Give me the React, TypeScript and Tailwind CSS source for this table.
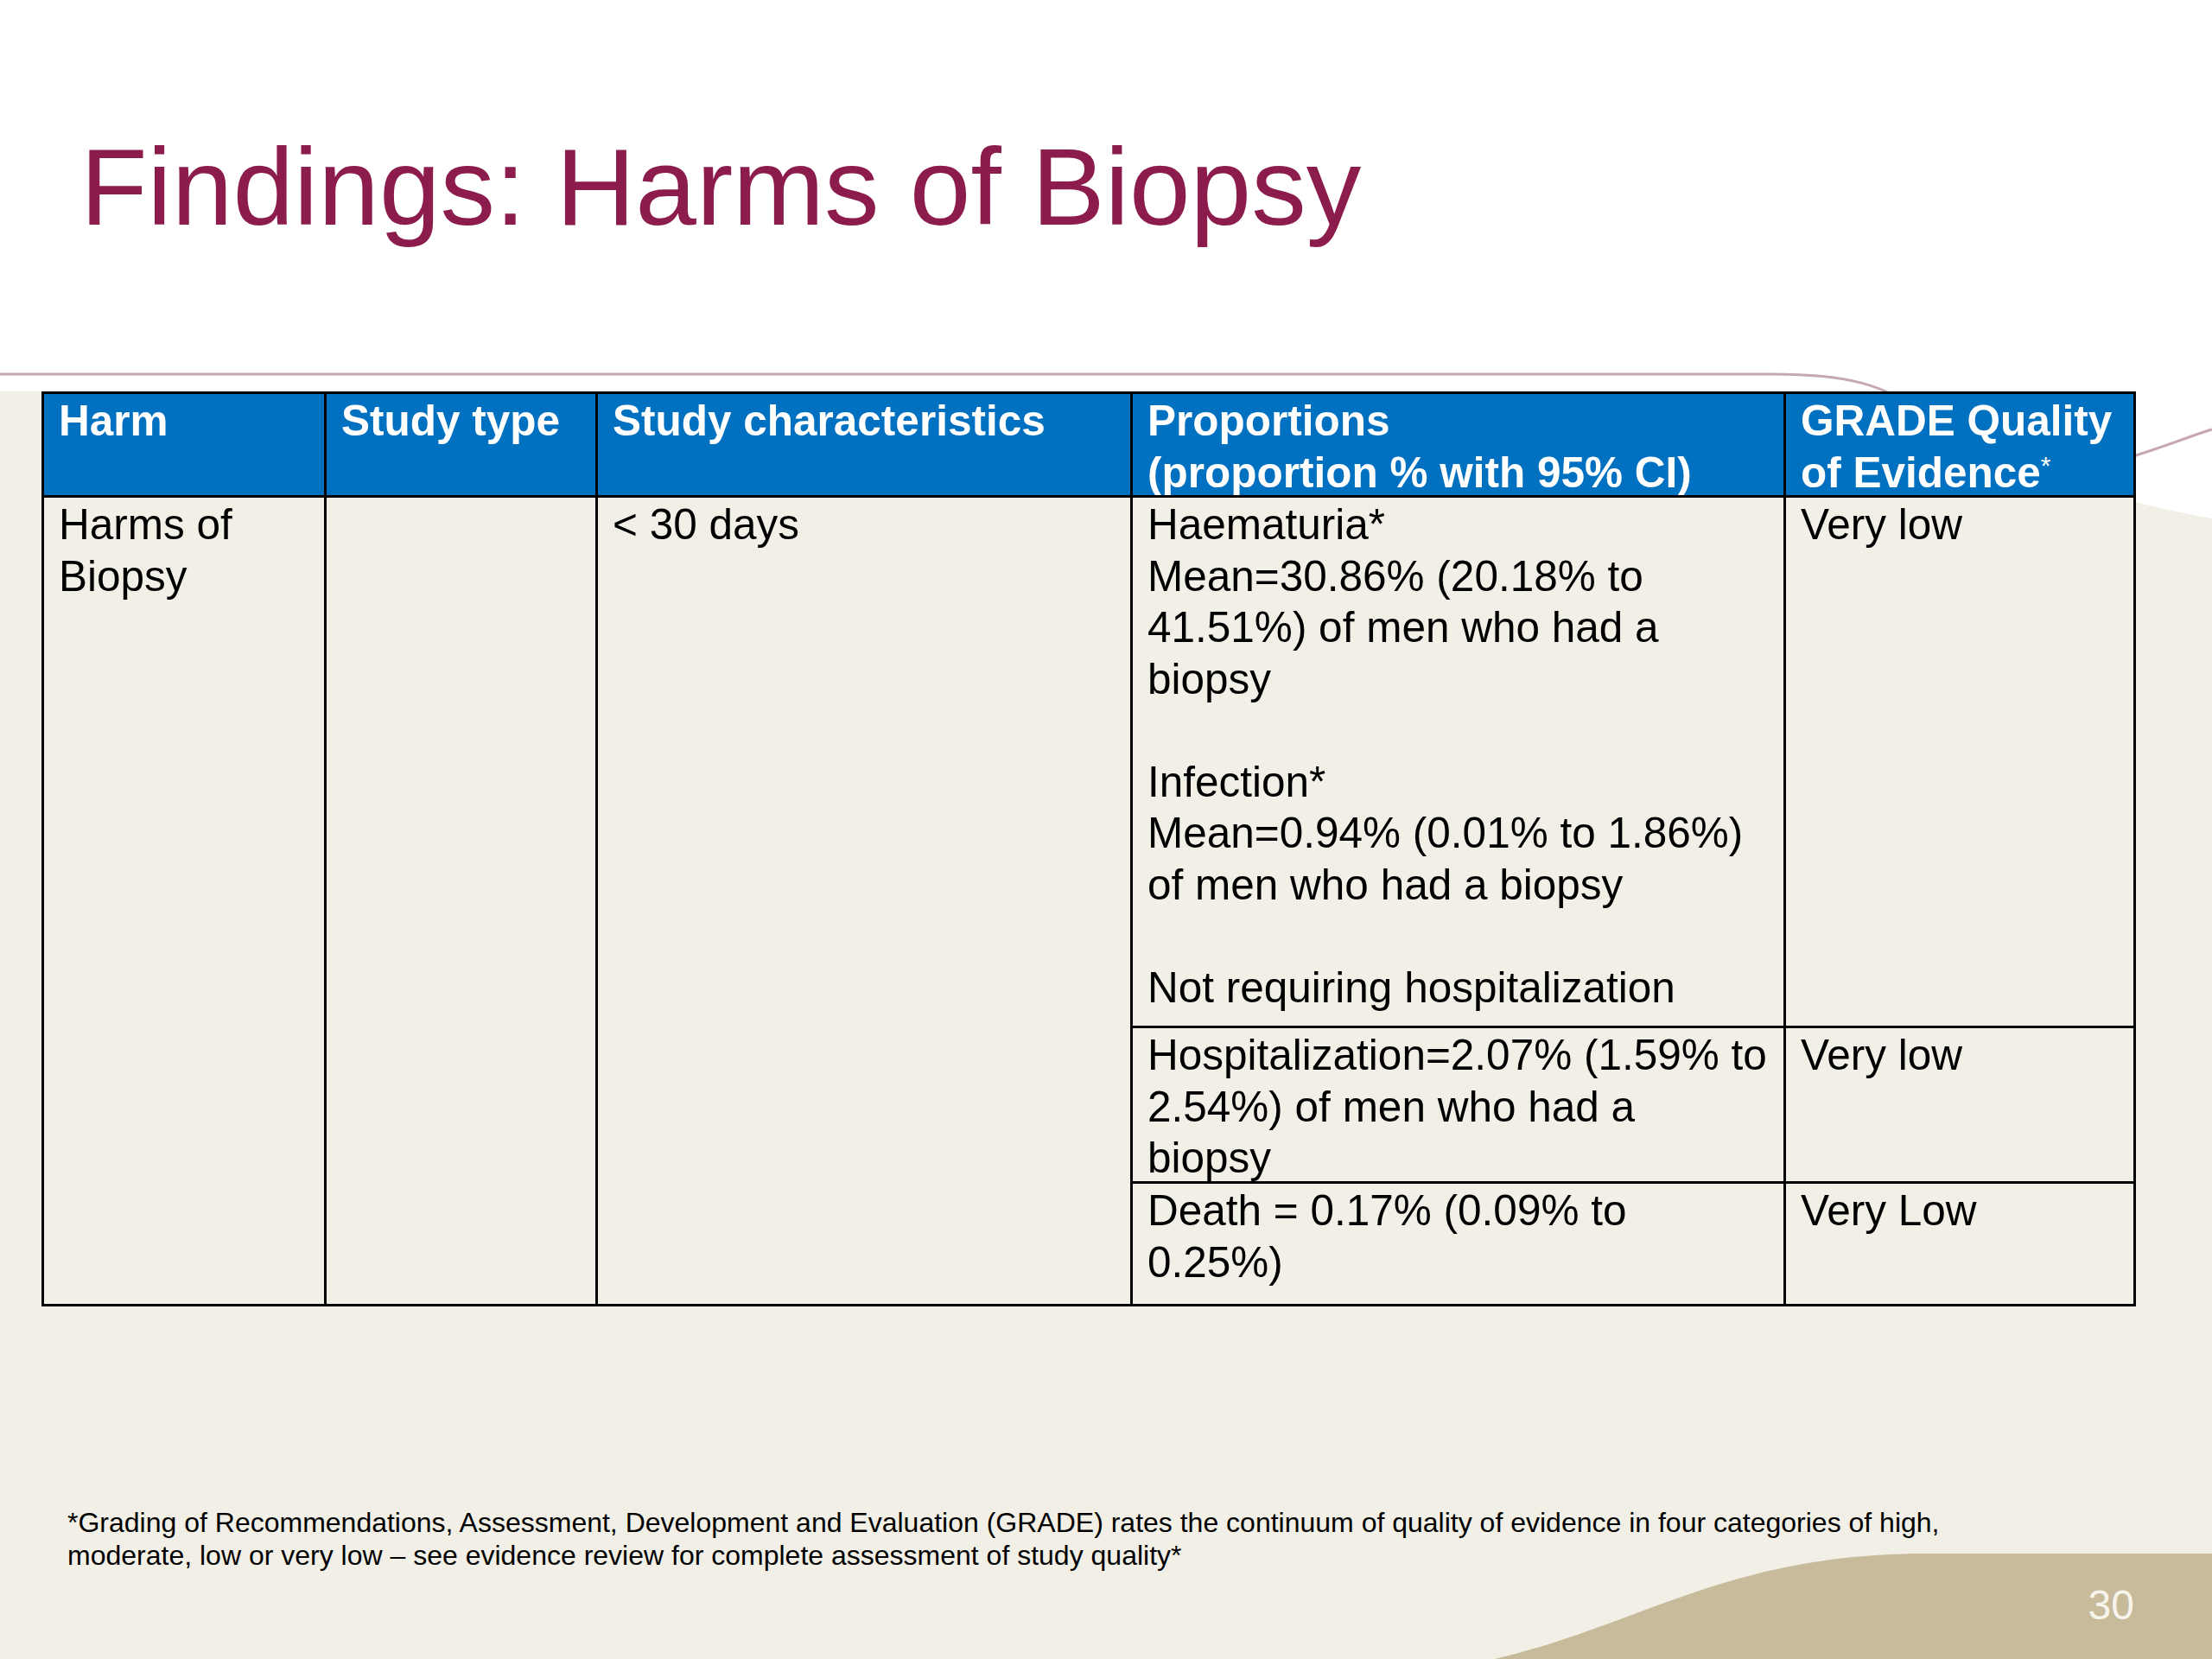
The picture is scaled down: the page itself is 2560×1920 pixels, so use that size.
import React from 'react';

const headCell = 'bg-[#0070c0] text-white font-bold pl-[17px] pt-[1px] overflow-hidden';
const bodyCell = 'bg-[#f1efe6] text-black pl-[17px] pt-[1px] overflow-hidden';

const Line: React.FC<{ children?: React.ReactNode }> = ({ children }) => (
  <div className="whitespace-nowrap h-[59.5px]">{children}</div>
);

export default function App() {
  return (
    <div
      className="relative w-[2560px] h-[1920px] overflow-hidden bg-white"
      style={{ fontFamily: '"Liberation Sans", Arial, sans-serif' }}
    >
      {/* slide background decoration */}
      <svg className="absolute inset-0" width="2560" height="1920" viewBox="0 0 2560 1920">
        <path d="M0 453 H1900 C2150 453 2350 565 2560 600 V1920 H0 Z" fill="#f1efe6" />
        <path
          d="M0 433 H2050 C2140 433 2180 445 2230 480 C2300 530 2420 545 2472 527 C2510 515 2540 503 2560 497"
          fill="none"
          stroke="#c6a7b4"
          strokeWidth="3"
        />
        <path d="M1730 1920 C1900 1880 2000 1798 2230 1798 H2560 V1920 Z" fill="#c8bb9b" />
      </svg>

      <div className="relative">
        <h1 className="pl-[93px] pt-[153px] text-[127px] leading-none text-[#8c1c4c] whitespace-nowrap">
          Findings: Harms of Biopsy
        </h1>

        <div className="mt-[173px] ml-[48px] w-[2424px] bg-black p-[3px] grid gap-[3px] grid-cols-[324px_311px_616px_753px_402px] grid-rows-[117px_611px_177px_139px] text-[49.5px] leading-[59.5px]">
          <div className={headCell}>Harm</div>
          <div className={headCell}>Study type</div>
          <div className={headCell}>Study characteristics</div>
          <div className={headCell}>
            <Line>Proportions</Line>
            <Line>(proportion % with 95% CI)</Line>
          </div>
          <div className={headCell}>
            <Line>GRADE Quality</Line>
            <Line>
              of Evidence<sup className="text-[30px] font-normal">*</sup>
            </Line>
          </div>

          <div className={`${bodyCell} row-span-3`}>
            <Line>Harms of</Line>
            <Line>Biopsy</Line>
          </div>
          <div className={`${bodyCell} row-span-3`} />
          <div className={`${bodyCell} row-span-3`}>
            <Line>&lt; 30 days</Line>
          </div>
          <div className={bodyCell}>
            <Line>Haematuria*</Line>
            <Line>Mean=30.86% (20.18% to</Line>
            <Line>41.51%) of men who had a</Line>
            <Line>biopsy</Line>
            <Line />
            <Line>Infection*</Line>
            <Line>Mean=0.94% (0.01% to 1.86%)</Line>
            <Line>of men who had a biopsy</Line>
            <Line />
            <Line>Not requiring hospitalization</Line>
          </div>
          <div className={bodyCell}>
            <Line>Very low</Line>
          </div>

          <div className={bodyCell}>
            <Line>Hospitalization=2.07% (1.59% to</Line>
            <Line>2.54%) of men who had a</Line>
            <Line>biopsy</Line>
          </div>
          <div className={bodyCell}>
            <Line>Very low</Line>
          </div>

          <div className={bodyCell}>
            <Line>Death = 0.17% (0.09% to</Line>
            <Line>0.25%)</Line>
          </div>
          <div className={bodyCell}>
            <Line>Very Low</Line>
          </div>
        </div>

        <p className="mt-[231px] pl-[78px] text-[32px] leading-[38.4px] text-black whitespace-nowrap">
          *Grading of Recommendations, Assessment, Development and Evaluation (GRADE) rates the continuum of quality of evidence in four categories of high,
          <br />
          moderate, low or very low – see evidence review for complete assessment of study quality*
        </p>
      </div>

      <div className="absolute right-[90px] top-[1834px] text-[48px] leading-none text-[#f7f4ec]">30</div>
    </div>
  );
}
